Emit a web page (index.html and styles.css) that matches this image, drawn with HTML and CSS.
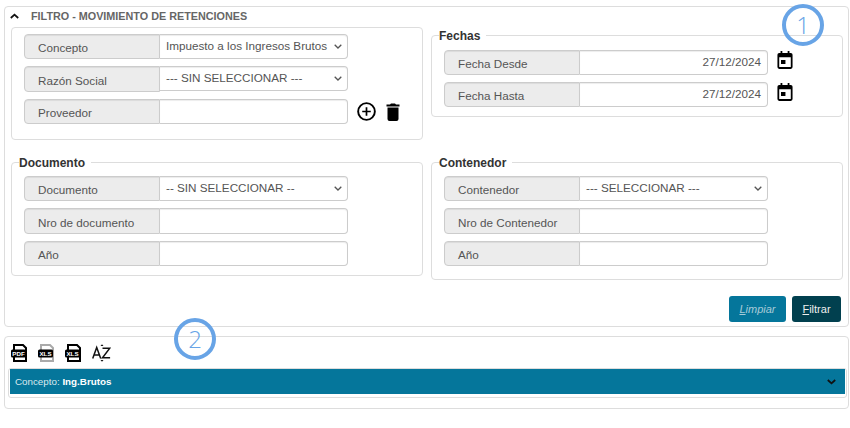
FILE: index.html
```html
<!DOCTYPE html>
<html lang="es">
<head>
<meta charset="utf-8">
<title>Filtro</title>
<link rel="stylesheet" href="styles.css">
</head>
<body>
<section class="panel filter">
  <header class="filter-head">
    <svg class="chev" width="9" height="6" viewBox="0 0 9 6"><path d="M.8 5l3.700-3.400L8.200 5" fill="none" stroke="#111" stroke-width="1.800"/></svg>
    <h2>FILTRO - MOVIMIENTO DE RETENCIONES</h2>
  </header>
  <div class="grid">
    <div class="box box-a">
      <div class="row gap"><span class="lab">Concepto</span><span class="sel">Impuesto a los Ingresos Brutos<svg class="car" width="8" height="5" viewBox="0 0 8 5"><path d="M.7.7L4 4 7.300.7" fill="none" stroke="#555" stroke-width="1.300"/></svg></span></div>
      <div class="row row-tall gap"><span class="lab">Razón Social</span><span class="sel">--- SIN SELECCIONAR ---<svg class="car" width="8" height="5" viewBox="0 0 8 5"><path d="M.7.7L4 4 7.300.7" fill="none" stroke="#555" stroke-width="1.300"/></svg></span></div>
      <div class="row"><span class="lab">Proveedor</span><span class="inp"></span>
        <svg class="ico-plus" width="19" height="19" viewBox="0 0 20 20"><circle cx="10" cy="10" r="8.800" fill="none" stroke="#000" stroke-width="2"/><path d="M10 5.500v9M5.500 10h9" stroke="#000" stroke-width="1.800"/></svg>
        <svg class="ico-trash" width="14" height="18" viewBox="0 0 14 18"><path d="M5 .5h4l1 1h3.500v2H.5v-2H4zM1.500 4.500h11V16a2 2 0 0 1-2 2h-7a2 2 0 0 1-2-2z" fill="#000"/></svg>
      </div>
    </div>
    <fieldset class="box box-b">
      <legend>Fechas</legend>
      <div class="row gap"><span class="lab">Fecha Desde</span><span class="inp date">27/12/2024</span>
        <svg class="cal" width="16" height="18" viewBox="0 0 18 20"><path d="M4 0h2v2h6V0h2v2h1.500A2 2 0 0 1 17.500 4v14a2 2 0 0 1-2 2h-13a2 2 0 0 1-2-2V4a2 2 0 0 1 2-2H4zM2.500 7v11h13V7zM4.500 10h5v4.500h-5z" fill="#000" fill-rule="evenodd"/></svg>
      </div>
      <div class="row"><span class="lab">Fecha Hasta</span><span class="inp date">27/12/2024</span>
        <svg class="cal" width="16" height="18" viewBox="0 0 18 20"><path d="M4 0h2v2h6V0h2v2h1.500A2 2 0 0 1 17.500 4v14a2 2 0 0 1-2 2h-13a2 2 0 0 1-2-2V4a2 2 0 0 1 2-2H4zM2.500 7v11h13V7zM4.500 10h5v4.500h-5z" fill="#000" fill-rule="evenodd"/></svg>
      </div>
    </fieldset>
    <fieldset class="box box-c box-doc">
      <legend>Documento</legend>
      <div class="row gap"><span class="lab">Documento</span><span class="sel">-- SIN SELECCIONAR --<svg class="car" width="8" height="5" viewBox="0 0 8 5"><path d="M.7.7L4 4 7.300.7" fill="none" stroke="#555" stroke-width="1.300"/></svg></span></div>
      <div class="row row-tall gap"><span class="lab">Nro de documento</span><span class="inp"></span></div>
      <div class="row"><span class="lab">Año</span><span class="inp"></span></div>
    </fieldset>
    <fieldset class="box box-c box-con">
      <legend>Contenedor</legend>
      <div class="row gap"><span class="lab">Contenedor</span><span class="sel">--- SELECCIONAR ---<svg class="car" width="8" height="5" viewBox="0 0 8 5"><path d="M.7.7L4 4 7.300.7" fill="none" stroke="#555" stroke-width="1.300"/></svg></span></div>
      <div class="row row-tall gap"><span class="lab">Nro de Contenedor</span><span class="inp"></span></div>
      <div class="row"><span class="lab">Año</span><span class="inp"></span></div>
    </fieldset>
  </div>
  <div class="actions">
    <button class="btn btn-light"><u>L</u>impiar</button>
    <button class="btn btn-dark"><u>F</u>iltrar</button>
  </div>
  <span class="badge badge-1">1</span>
</section>
<section class="panel results">
  <div class="tools">
    <svg class="doc" width="16" height="18" viewBox="0 0 16 18"><path d="M3 1h9l3 3v13H3z" fill="#fff" stroke="#000" stroke-width="2"/><rect x="0" y="5.500" width="15" height="8" rx="1.500" fill="#000"/><text x="7.500" y="11.800" class="doc-t">PDF</text></svg>
    <svg class="doc" width="16" height="18" viewBox="0 0 16 18"><path d="M3 1h9l3 3v13H3z" fill="#fff" stroke="#aaa" stroke-width="2"/><rect x="0" y="5.500" width="15" height="8" rx="1.500" fill="#000"/><text x="7.500" y="11.800" class="doc-t">XLS</text></svg>
    <svg class="doc" width="16" height="18" viewBox="0 0 16 18"><path d="M3 1h9l3 3v13H3z" fill="#fff" stroke="#000" stroke-width="2"/><rect x="0" y="5.500" width="15" height="8" rx="1.500" fill="#000"/><text x="7.500" y="11.800" class="doc-t">XLS</text></svg>
    <svg class="az" width="19" height="18" viewBox="0 0 19 18"><path d="M.7 14.500L4.700 3.500l4 11M2 11h5.400M10.500 4.200h7.300l-7.300 9.600h7.600" fill="none" stroke="#111" stroke-width="1.500"/><path d="M8.500 2L10 .3 11.500 2zM8.500 16L10 17.700 11.500 16z" fill="#111"/></svg>
  </div>
  <div class="bar-wrap">
    <div class="bar"><span>Concepto: <b>Ing.Brutos</b></span>
      <svg width="9" height="6" viewBox="0 0 9 6"><path d="M.8 1l3.700 3.400L8.200 1" fill="none" stroke="#111" stroke-width="1.800"/></svg>
    </div>
  </div>
  <span class="badge badge-2">2</span>
</section>
</body>
</html>
```
FILE: styles.css
```css
* { box-sizing: border-box; }
html, body { margin: 0; padding: 0; }
body { width: 850px; height: 428px; background: #fff; font-family: "Liberation Sans", Arial, sans-serif; color: #555; padding: 6px 1px 0 4px; overflow: hidden; }
.panel { position: relative; border: 1px solid #ddd; border-radius: 4px; background: #fff; }
.filter { height: 321px; padding: 0 6px; }
.filter-head { display: flex; align-items: center; height: 20px; padding: 0 0 2px 0; gap: 12px; margin-left: -1px; }
.filter-head h2 { margin: 0; font-size: 10.8px; line-height: 18px; font-weight: 700; color: #666; white-space: nowrap; }
.grid { display: grid; grid-template-columns: 420px 412px; grid-template-rows: 127px auto; align-items: start; }
.box { border: 1px solid #ddd; border-radius: 4px; margin: 0; min-width: 0; padding: 0 0 0 12px; }
legend { font-size: 12px; font-weight: 700; color: #333; line-height: 14px; padding: 2px 6px 0 0; margin-left: -5px; }
.box-a { width: 412px; height: 113px; padding-top: 6px; }
.box-b { height: 90px; padding-top: 7px; }
.box-c { padding-top: 6px; }
.box-doc { width: 412px; height: 122px; }
.box-con { height: 126px; }
.row { display: flex; align-items: center; height: 25px; }
.row-tall { height: 26px; }
.gap { margin-bottom: 7px; }
.lab { width: 136px; height: 25px; flex: none; background: #ececec; border: 1px solid #ccc; border-radius: 4px 0 0 4px; font-size: 11.7px; line-height: 25px; padding-left: 13px; color: #555; box-shadow: inset 0 1px 1px rgba(0,0,0,.075); white-space: nowrap; }
.row-tall .lab { height: 26px; line-height: 27px; }
.sel, .inp { width: 188px; height: 25px; flex: none; background: #fff; border: 1px solid #ccc; border-left: 0; border-radius: 0 4px 4px 0; font-size: 11.7px; padding: 0 5px 2px 6px; color: #555; display: flex; align-items: center; justify-content: space-between; white-space: nowrap; box-shadow: inset 0 1px 1px rgba(0,0,0,.075); }
.row-tall .inp { height: 26px; }
.row-tall .sel { align-self: flex-start; }
.sel .car { margin-top: 2px; }
.date { justify-content: flex-end; padding-right: 6px; }
.ico-plus { margin-left: 9px; }
.ico-trash { margin-left: 10px; }
.cal { margin-left: 9px; align-self: flex-start; margin-top: 1px; }
.actions { display: flex; justify-content: flex-end; gap: 6px; margin-top: 16px; padding-right: 1px; }
.btn { height: 26px; border: 0; border-radius: 3px; font: 11px/26px "Liberation Sans", Arial, sans-serif; color: #eee; padding: 0; }
.btn-light { width: 57px; background: #05769b; font-style: italic; color: #a9cbd8; }
.btn-dark { width: 49px; background: #01404f; }
.badge { position: absolute; width: 42px; height: 42px; border: 4px solid #68a4e6; border-radius: 50%; color: #68a4e6; font-size: 24px; line-height: 33px; text-align: center; font-family: "Open Sans", sans-serif; font-weight: 300; }
.badge-1 { left: 777px; top: -3px; }
.badge-2 { left: 169px; top: -19px; }
.results { height: 73px; margin-top: 9px; padding: 0 1px 0 3px; }
.tools { display: flex; align-items: center; gap: 11px; height: 31px; padding-left: 3px; }
.doc-t { font: 700 6.2px "Liberation Sans", Arial, sans-serif; fill: #fff; text-anchor: middle; }
.bar-wrap { border: 1px solid #ddd; border-radius: 3px; height: 30px; padding: 0 1px; }
.bar { background: #05769b; height: 25px; display: flex; align-items: center; justify-content: space-between; padding: 0 9px 0 5px; font-size: 9.8px; color: #dbe9ee; }
.bar b { color: #fff; }
```
